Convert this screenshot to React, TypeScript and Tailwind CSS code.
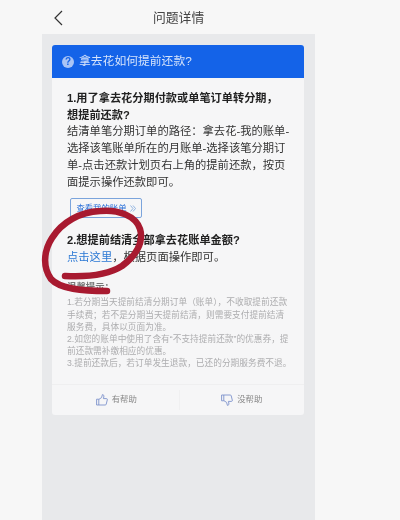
export default function App() {
  return (
    <div className="relative w-[400px] h-[520px] overflow-hidden bg-[#f7f7f7] flex flex-col blur-[0.3px]" style={{ fontFamily: '"Liberation Sans", "Noto Sans CJK SC", sans-serif' }}>
      <header className="relative h-[34px] w-full flex items-center">
        <svg className="absolute left-[53px] top-[10px]" width="11" height="16" viewBox="0 0 11 16" fill="none" stroke="#333" strokeWidth="1.2"><path d="M9 1 L2 8 L9 15" /></svg>
        <span className="ml-[153px] mt-[2px] text-[12.8px] text-[#444]">问题详情</span>
      </header>
      <main className="ml-[42px] w-[273px] flex-1 bg-[#e8e9eb] pt-[11px] px-[10px]">
        <section className="w-[252px] bg-[#f6f6f7] rounded-[3px] overflow-hidden whitespace-nowrap">
          <div className="h-[33px] bg-[#1463e8] flex items-center pl-[10px] gap-[5px]">
            <span className="w-[12px] h-[12px] rounded-full bg-[#a9c4f5] text-[#1463e8] text-[10px] font-bold flex items-center justify-center leading-none">?</span>
            <span className="text-[11.8px] text-[#d5e3fb]">拿去花如何提前还款?</span>
          </div>
          <div className="pl-[15px] pr-[12px] pt-[12px]">
            <div className="text-[11.3px] leading-[16.7px] text-[#333]">
              <p className="font-bold text-[#222] text-[11.2px]">1.用了拿去花分期付款或单笔订单转分期，<br />想提前还款?</p>
              <p>结清单笔分期订单的路径：拿去花-我的账单-<br />选择该笔账单所在的月账单-选择该笔分期订<br />单-点击还款计划页右上角的提前还款，按页<br />面提示操作还款即可。</p>
            </div>
            <div className="mt-[8px] ml-[3px] w-[72px] h-[20px] border border-[#7ba4dc] rounded-[2px] flex items-center justify-center gap-[3px] text-[8.4px] text-[#2a6fd8]">
              <span>查看我的账单</span>
              <svg width="6" height="7" viewBox="0 0 6 7" fill="none" stroke="#7ba4dc" strokeWidth="0.8"><path d="M.5.5 3 3.5.5 6.5M3 .5 5.5 3.5 3 6.5" /></svg>
            </div>
            <div className="mt-[14px] text-[11.3px] leading-[17px] text-[#333]">
              <p className="font-bold text-[#222] text-[11.2px]">2.想提前结清全部拿去花账单金额?</p>
              <p><span className="text-[#2b78d4]">点击这里</span>，根据页面操作即可。</p>
            </div>
            <div className="mt-[15px] text-[8.7px] leading-[12.2px] text-[#adadaf]">
              <p className="font-bold text-[#777] text-[9.4px]">温馨提示：</p>
              <p className="mt-[3px]">1.若分期当天提前结清分期订单（账单），不收取提前还款<br />手续费；若不是分期当天提前结清，则需要支付提前结清<br />服务费，具体以页面为准。<br />2.如您的账单中使用了含有“不支持提前还款”的优惠券，提<br />前还款需补缴相应的优惠。<br />3.提前还款后，若订单发生退款，已还的分期服务费不退。</p>
            </div>
          </div>
          <div className="mt-[14px] h-[31px] border-t border-[#efeff0] flex items-center text-[8.4px] text-[#888]">
            <div className="flex-1 flex items-center justify-center gap-[4px] border-r border-[#f0f0f1] h-[20px] pl-[2px]">
              <svg width="12" height="12" viewBox="0 0 12 12" fill="none" stroke="#7d92cc" strokeWidth="0.9"><path d="M.6 5.2H2.8V11H.6ZM2.8 5.4 5.6 3.6 6.4.6C7.6.6 8.2 1.6 7.8 3L7.4 4.6H10.6C11.2 4.6 11.5 5.2 11.3 5.8L10.2 10.3C10.1 10.8 9.7 11 9.2 11H2.8" /></svg>
              <span>有帮助</span>
            </div>
            <div className="flex-1 flex items-center justify-center gap-[4px] h-[20px]">
              <svg width="12" height="12" viewBox="0 0 12 12" fill="none" stroke="#7d92cc" strokeWidth="0.9"><path d="M.6 6.8H2.8V1H.6ZM2.8 6.6 5.6 8.4 6.4 11.4C7.6 11.4 8.2 10.4 7.8 9L7.4 7.4H10.6C11.2 7.4 11.5 6.8 11.3 6.2L10.2 1.7C10.1 1.2 9.7 1 9.2 1H2.8" /></svg>
              <span>没帮助</span>
            </div>
          </div>
        </section>
      </main>
      <svg className="absolute inset-0 pointer-events-none" width="400" height="520" viewBox="0 0 400 520" fill="none">
        <path d="M65 276 C85 277 108 275 122 266 C136 256 144 242 140 229 C136 216 118 209 100 211 C80 212 62 222 52 238 C43 252 43 268 51 279 C60 289 82 291 107 291" stroke="#a81a30" strokeWidth="6.5" strokeLinecap="round" />
      </svg>
    </div>
  );
}
